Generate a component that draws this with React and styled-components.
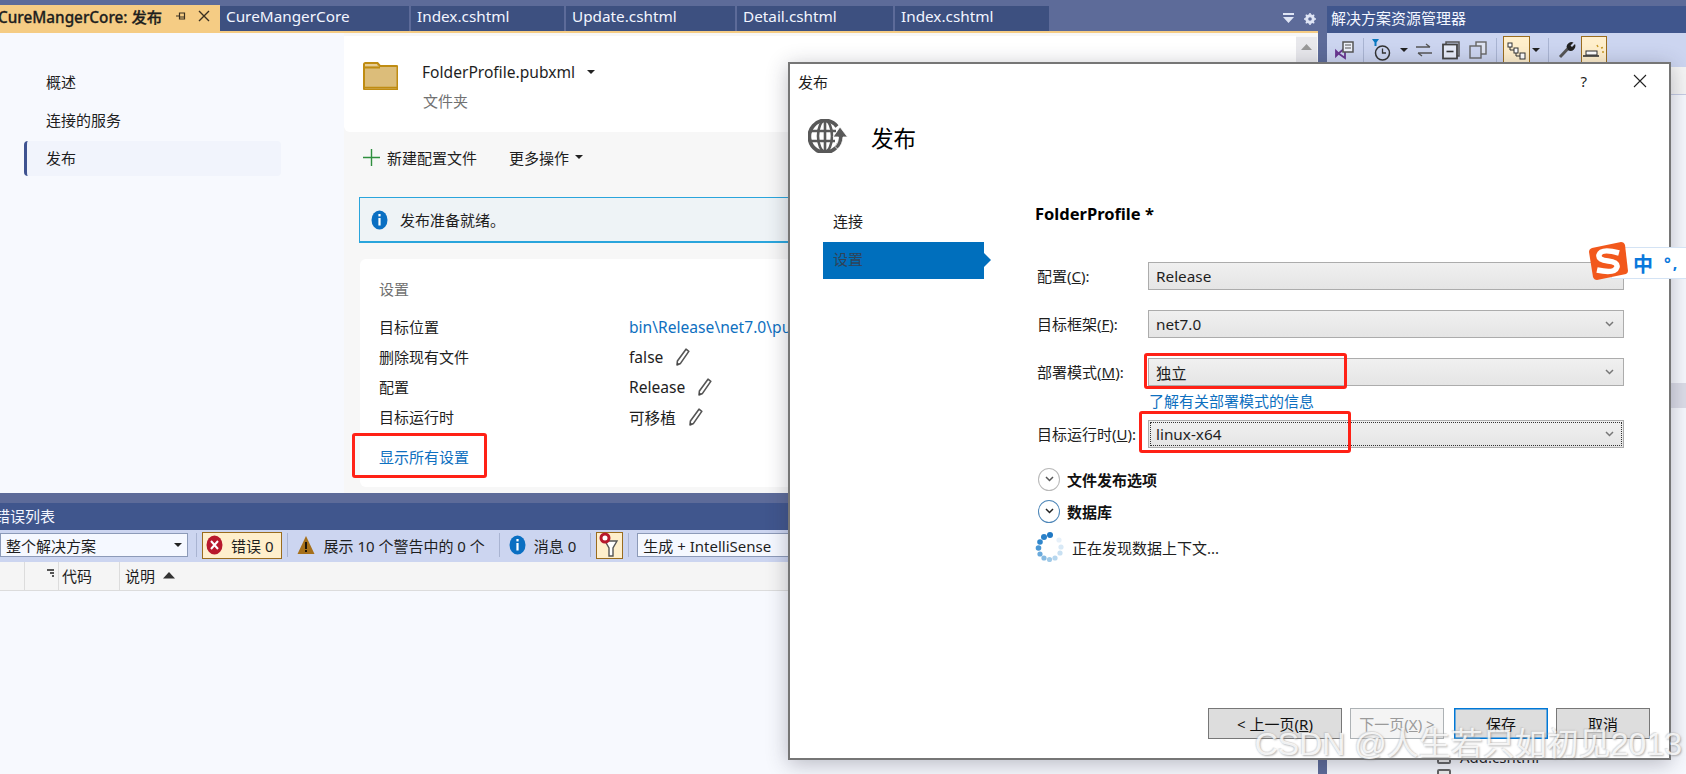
import React from "react";
import styled, { createGlobalStyle } from "styled-components";

const GlobalStyle = createGlobalStyle`
  html, body {
    margin: 0;
    height: 774px;
    overflow: hidden;
    background: #5d6b99;
    font-family: "Noto Sans", "Noto Sans CJK SC", sans-serif;
    font-size: 15px;
    color: #1e1e1e;
  }
`;

const Screen = styled.div`
  position: relative;
  width: 1686px;
  height: 774px;
  display: grid;
  grid-template-columns: 1327px 359px;
  overflow: hidden;
  background: #5d6b99;
`;

const LeftColumn = styled.div`
  display: flex;
  flex-direction: column;
  padding-right: 9px;
  min-width: 0;
`;

const TabStrip = styled.div`
  display: flex;
  align-items: flex-end;
  height: 31px;
  padding-top: 6px;
  box-sizing: border-box;
  gap: 2px;
`;

const Tab = styled.div`
  width: ${(p) => p.$width}px;
  height: 25px;
  padding-left: 6px;
  box-sizing: border-box;
  flex: none;
  background: #3d5080;
  color: #f2f5ff;
  font-size: 15.3px;
  line-height: 21px;
  white-space: nowrap;
`;

const ActiveTab = styled.div`
  width: 220px;
  height: 26px;
  padding-bottom: 4px;
  box-sizing: border-box;
  margin-right: -2px;
  flex: none;
  display: flex;
  align-items: center;
  background: #f5cc84;
  color: #1e1e1e;
  font-size: 15.3px;
  font-weight: 500;
  white-space: nowrap;
  overflow: hidden;
`;

const ActiveTabName = styled.span`
  margin-left: -2px;
  width: 177px;
  flex: none;
  -webkit-text-stroke: 0.3px #1e1e1e;
`;

const StripIcons = styled.div`
  margin-left: auto;
  display: flex;
  align-items: center;
  gap: 10px;
  height: 25px;
  padding-right: 2px;
`;

const DocArea = styled.div`
  display: flex;
  height: 462px;
  flex: none;
  border-top: 2px solid #f5cc84;
  box-sizing: border-box;
  background: #f7f7f7;
  overflow: hidden;
`;

const Sidebar = styled.nav`
  width: 344px;
  flex: none;
  padding: 32px 0 0 24px;
  box-sizing: border-box;
  background: #f7f9fe;
`;

const SideItem = styled.div`
  width: 257px;
  height: 35px;
  margin-bottom: 3px;
  padding-left: ${(p) => (p.$active ? 19 : 22)}px;
  box-sizing: border-box;
  line-height: 35px;
  border-radius: 4px;
  background: ${(p) => (p.$active ? "#f1f4fc" : "transparent")};
  border-left: ${(p) => (p.$active ? "3px solid #3f5391" : "0")};
`;

const DocContent = styled.main`
  flex: 1;
  min-width: 0;
`;

const DocScrollBar = styled.div`
  width: 21px;
  flex: none;
  margin: 4px 1px 0 0;
  padding-top: 7px;
  background: #e8e8ec;
  display: flex;
  justify-content: center;
  align-items: flex-start;
`;

const ProfileCard = styled.section`
  height: 96px;
  margin-top: 3px;
  padding: 26px 0 0 19px;
  box-sizing: border-box;
  display: flex;
  background: #fff;
  border-bottom-left-radius: 6px;
`;

const ProfileText = styled.div`
  margin-left: 24px;
  display: flex;
  flex-direction: column;
  gap: 9px;
`;

const ProfileName = styled.div`
  height: 20px;
  line-height: 20px;
  display: flex;
  align-items: center;
  gap: 12px;
  font-size: 15.6px;
`;

const Muted = styled.div`
  height: 20px;
  line-height: 20px;
  color: #717171;
  padding-left: ${(p) => p.$indent || 0}px;
`;

const Caret = styled.i`
  width: 0;
  height: 0;
  border-left: 4px solid transparent;
  border-right: 4px solid transparent;
  border-top: 4px solid #222;
`;

const ActionRow = styled.div`
  height: 50px;
  display: flex;
  align-items: center;
  padding-left: 19px;
`;

const ActionLabel = styled.span`
  margin-left: ${(p) => p.$gap}px;
  display: flex;
  align-items: center;
  gap: 6px;
`;

const InfoBar = styled.div`
  height: 46px;
  margin: 15px 0 0 15px;
  padding-left: 11px;
  box-sizing: border-box;
  display: flex;
  align-items: center;
  gap: 12px;
  background: #eef3f6;
  border: 1px solid #2aa5dc;
  border-bottom-width: 2px;
`;

const SettingsCard = styled.section`
  height: 228px;
  margin: 16px 0 0 16px;
  padding: 20px 0 0 19px;
  box-sizing: border-box;
  background: #fff;
  border-radius: 6px;
`;

const SettingsGrid = styled.div`
  margin-top: 13px;
  display: grid;
  grid-template-columns: 250px 1fr;
  grid-auto-rows: 30px;
  align-items: center;
`;

const SettingLabel = styled.span`
  padding-bottom: 2px;
`;

const SettingValue = styled.span`
  display: flex;
  align-items: center;
  gap: 11px;
  white-space: nowrap;
  font-size: 15.6px;
  color: ${(p) => (p.$link ? "#0e70c0" : "#1e1e1e")};
`;

const ShowAllLink = styled.a`
  position: relative;
  display: inline-block;
  margin-top: 15px;
  height: 20px;
  line-height: 20px;
  color: #0e70c0;
`;

const Highlight = styled.span`
  position: absolute;
  left: ${(p) => p.$left}px;
  top: ${(p) => p.$top}px;
  width: ${(p) => p.$width}px;
  height: ${(p) => p.$height}px;
  box-sizing: border-box;
  border: 3px solid #ff2116;
  border-radius: 3px;
  pointer-events: none;
`;

const PanelGap = styled.div`
  height: 10px;
  flex: none;
`;

const PanelTitle = styled.div`
  height: 27px;
  flex: none;
  padding-left: ${(p) => p.$pad}px;
  background: #40568d;
  color: #f4f6ff;
  line-height: ${(p) => p.$line || 25}px;
  white-space: nowrap;
  overflow: hidden;
`;

const CutTitle = styled.span`
  margin-left: -5px;
`;

const ErrorPanel = styled.section`
  flex: 1;
  display: flex;
  flex-direction: column;
  background: #f7f9fe;
  min-height: 0;
`;

const ErrorToolbar = styled.div`
  height: 32px;
  flex: none;
  padding-bottom: 2px;
  box-sizing: border-box;
  display: flex;
  align-items: center;
  background: #ccd5f0;
  white-space: nowrap;
  overflow: hidden;
`;

const ScopeCombo = styled.div`
  width: ${(p) => p.$width}px;
  margin-left: ${(p) => p.$left}px;
  flex: none;
  height: 24px;
  padding: 0 5px;
  box-sizing: border-box;
  display: flex;
  align-items: center;
  justify-content: space-between;
  background: #f5f8ff;
  border: 1px solid #8c9ab8;
`;

const BarSep = styled.i`
  width: 1px;
  height: 24px;
  flex: none;
  margin: 0 5px 0 ${(p) => p.$left || 5}px;
  background: #a9b4d2;
`;

const TallyButton = styled.div`
  height: 27px;
  flex: none;
  box-sizing: border-box;
  display: flex;
  align-items: center;
  gap: 8px;
  padding: 0 8px 0 3px;
  background: ${(p) => (p.$active ? "#ffefcc" : "transparent")};
  border: 1px solid ${(p) => (p.$active ? "#9a6c1e" : "transparent")};
`;

const FilterButton = styled(TallyButton)`
  width: 27px;
  padding: 0 0 0 2px;
`;

const ColumnHeader = styled.div`
  height: 28px;
  flex: none;
  display: flex;
  align-items: center;
  background: #f5f5f5;
  border-bottom: 1px solid #dcdcdc;
`;

const HeaderCell = styled.div`
  width: ${(p) => p.$width}px;
  height: 100%;
  flex: none;
  box-sizing: border-box;
  padding: 0 0 2px 3px;
  display: flex;
  align-items: center;
  gap: 8px;
  border-right: 1px solid #dcdcdc;
  &:last-child {
    border-right: 0;
    padding-left: 5px;
  }
`;

const GlyphCell = styled(HeaderCell)`
  align-items: flex-start;
  justify-content: flex-end;
  padding: 7px 3px 0 0;
`;

const RightColumn = styled.aside`
  display: flex;
  flex-direction: column;
  min-width: 0;
`;

const TopGap = styled.div`
  height: 6px;
  flex: none;
`;

const ExplorerToolbar = styled.div`
  height: 34px;
  flex: none;
  padding-left: 8px;
  display: flex;
  align-items: flex-start;
  background: #ccd5f0;
  overflow: hidden;
`;

const ToolSlot = styled.span`
  width: ${(p) => p.$w}px;
  margin-left: ${(p) => p.$gap}px;
  margin-top: 4px;
  flex: none;
  height: 26px;
  display: flex;
  align-items: center;
  justify-content: center;
`;

const ToolSep = styled.i`
  width: 1px;
  height: 24px;
  margin: 5px 0 0 ${(p) => p.$gap}px;
  flex: none;
  background: #a9b4d2;
`;

const ToolActive = styled(ToolSlot)`
  margin-top: 3px;
  height: 30px;
  box-sizing: border-box;
  background: #ffefcc;
  border: 1px solid #9a6c1e;
`;

const SearchStrip = styled.div`
  height: 27px;
  flex: none;
  background: #f5f5f5;
  border-bottom: 1px solid #c5cce4;
`;

const Tree = styled.div`
  flex: 1;
  background: #f7f9fe;
  overflow: hidden;
`;

const TreeSelected = styled.div`
  height: 25px;
  margin-top: 288px;
  background: #dcdde8;
`;

const TreeRow = styled.div`
  height: 19px;
  margin-top: ${(p) => p.$top}px;
  padding-left: 110px;
  display: flex;
  align-items: center;
  gap: 9px;
`;

const FileIcon = styled.i`
  width: 14px;
  height: 14px;
  flex: none;
  box-sizing: border-box;
  background: #eee;
  border: 2px solid #666;
  border-radius: 2px;
`;

const Dialog = styled.div`
  position: absolute;
  left: 788px;
  top: 62px;
  width: 883px;
  height: 698px;
  box-sizing: border-box;
  display: flex;
  flex-direction: column;
  background: #fff;
  border: 2px solid #767676;
  box-shadow: 0 4px 20px rgba(40, 40, 60, 0.3);
`;

const DialogBar = styled.div`
  height: 34px;
  flex: none;
  padding: 0 22px 0 8px;
  display: flex;
  align-items: center;
`;

const DialogHelp = styled.span`
  margin-left: auto;
  margin-right: 46px;
`;

const DialogHead = styled.div`
  height: 40px;
  margin-top: 21px;
  flex: none;
  padding-left: 18px;
  display: flex;
  gap: 23px;
`;

const DialogHeading = styled.h1`
  margin: 0;
  line-height: 40px;
  font-size: 22.5px;
  font-weight: 400;
  color: #000;
`;

const DialogBody = styled.div`
  flex: 1;
  min-height: 0;
  margin-top: 45px;
  padding-left: 33px;
  display: flex;
`;

const WizardNav = styled.div`
  width: 161px;
  flex: none;
  display: flex;
  flex-direction: column;
  gap: 1px;
`;

const WizardStep = styled.div`
  position: relative;
  height: 37px;
  padding-left: 10px;
  line-height: 35px;
  background: ${(p) => (p.$active ? "#006fbd" : "transparent")};
  color: ${(p) => (p.$active ? "#2f4358" : "#1e1e1e")};

  ${(p) =>
    p.$active &&
    `&::after {
      content: "";
      position: absolute;
      left: 100%;
      top: 11px;
      border-left: 7px solid #006fbd;
      border-top: 7px solid transparent;
      border-bottom: 7px solid transparent;
    }`}
`;

const WizardForm = styled.div`
  margin-left: 51px;
  width: 589px;
`;

const ProfileHeading = styled.div`
  height: 20px;
  margin-bottom: 38px;
  line-height: 20px;
  font-size: 16.5px;
  font-weight: 700;
  color: #000;
`;

const FormRow = styled.div`
  display: grid;
  grid-template-columns: 113px 476px;
  align-items: center;
  height: 28px;
  margin-bottom: ${(p) => p.$after}px;
`;

const FormLabel = styled.label`
  padding: 0 0 2px 2px;
  white-space: nowrap;
`;

const Select = styled.div`
  position: relative;
  height: 28px;
  padding: 0 9px 0 7px;
  box-sizing: border-box;
  display: flex;
  align-items: center;
  justify-content: space-between;
  background: linear-gradient(#f0f0f0, #e5e5e5);
  border: 1px solid #acacac;
  font-size: 15.3px;

  ${(p) =>
    p.$focused &&
    `&::before {
      content: "";
      position: absolute;
      inset: 1px;
      border: 1px dotted #333;
    }`}
`;

const FormHint = styled.a`
  display: block;
  height: 20px;
  line-height: 20px;
  margin: 0 0 9px 114px;
  color: #0e70c0;
  white-space: nowrap;
`;

const ExpanderRow = styled.div`
  height: 24px;
  margin-top: ${(p) => p.$top}px;
  padding-left: 3px;
  display: flex;
  align-items: center;
  gap: 7px;
  font-weight: 700;
  color: #111;
`;

const ExpanderCircle = styled.span`
  width: 22px;
  height: 23px;
  box-sizing: border-box;
  display: flex;
  align-items: center;
  justify-content: center;
  border-radius: 50%;
  background: #fff;
  border: 1.5px solid ${(p) => (p.$hot ? "#4d86b8" : "#b9b9b9")};
`;

const LoadingRow = styled.div`
  height: 30px;
  margin-top: 9px;
  display: flex;
  align-items: center;
  gap: 7px;
`;

const DialogFooter = styled.div`
  flex: none;
  padding: 0 19px 19px 0;
  display: flex;
  justify-content: flex-end;
  gap: 8px;
`;

const WizardButton = styled.div`
  width: ${(p) => p.$width || 94}px;
  height: 31px;
  margin-right: ${(p) => (p.$spaced ? 2 : 0)}px;
  box-sizing: border-box;
  display: flex;
  align-items: center;
  justify-content: center;
  background: ${(p) => (p.$disabled ? "#f4f4f4" : "#dddddd")};
  color: ${(p) => (p.$disabled ? "#9a9a9a" : "#111")};
  border: 1px solid
    ${(p) => (p.$disabled ? "#adb2b5" : p.$primary ? "#0078d7" : "#777")};
  box-shadow: ${(p) => (p.$primary ? "inset 0 0 0 0.5px #0078d7" : "none")};
`;

const ImeBar = styled.div`
  position: absolute;
  left: 1589px;
  top: 242px;
  width: 97px;
  height: 38px;
`;

const ImeStrip = styled.div`
  position: absolute;
  left: 22px;
  right: 0;
  top: 5px;
  height: 32px;
  box-sizing: border-box;
  padding-left: 21px;
  display: flex;
  align-items: center;
  gap: 11px;
  background: #fff;
  border: 1px solid #d4e3f4;
  border-right: 0;
  color: #0a78dc;
  font-weight: 700;
  font-size: 20px;
`;

const ImeLogo = styled.svg`
  position: absolute;
  left: 0;
  top: 0;
`;

const ImePunct = styled.span`
  font-size: 16px;
  letter-spacing: 2px;
`;

const Watermark = styled.div`
  position: absolute;
  right: 4px;
  bottom: 13px;
  font-family: "Liberation Sans", "Noto Sans CJK SC", sans-serif;
  font-size: 32px;
  line-height: 34px;
  white-space: nowrap;
  color: rgba(255, 255, 255, 0.82);
  text-shadow: 1px 1px 2px rgba(120, 120, 120, 0.55), -1px -1px 1px rgba(180, 180, 180, 0.4);
  pointer-events: none;
`;

const Pencil = () => (
  <svg width="16" height="18" viewBox="0 0 16 18" style={{ flex: "none" }}>
    <path d="M12 1.200l2.800 2.200L6.500 15.400 3 17l.4-4z" fill="#fff" stroke="#555" strokeWidth="1.600" strokeLinejoin="round" />
    <path d="M3.300 14.600l2 1.400L3 17z" fill="#444" />
  </svg>
);

const Chevron = ({ color = "#777" }) => (
  <svg width="9" height="6" viewBox="0 0 9 6">
    <path d="M1 1l3.500 3.500L8 1" fill="none" stroke={color} strokeWidth="1.500" />
  </svg>
);

const FolderIcon = () => (
  <svg width="35" height="28" viewBox="0 0 35 28" style={{ flex: "none" }}>
    <path d="M1 2.500Q1 1 2.500 1h12l2.500 3h16.500q1 0 1 1v21.500q0 1-1 1H2q-1 0-1-1z" fill="#dcbd7a" stroke="#bf8c12" strokeWidth="2" />
    <path d="M2 5.500h15" stroke="#bf8c12" strokeWidth="2" />
    <path d="M2 3h12" stroke="#ead3a0" strokeWidth="1.500" />
    <path d="M2 25.500h32" stroke="#bf8c12" strokeWidth="1.500" />
  </svg>
);

const InfoDot = ({ size = 17, color = "#0a6fc2" }) => (
  <svg width={size} height={size + 3} viewBox="0 0 17 20" style={{ flex: "none" }}>
    <ellipse cx="8.500" cy="10" rx="8" ry="9.500" fill={color} />
    <rect x="7.400" y="8" width="2.200" height="7.500" fill="#fff" />
    <rect x="7.400" y="4" width="2.200" height="2.400" fill="#fff" />
  </svg>
);

const ErrorDot = () => (
  <svg width="17" height="20" viewBox="0 0 17 20" style={{ flex: "none" }}>
    <ellipse cx="8.500" cy="10" rx="8" ry="9.500" fill="#b8182c" />
    <path d="M5 6l7 8M12 6l-7 8" stroke="#fff" strokeWidth="2" />
  </svg>
);

const WarnTriangle = () => (
  <svg width="18" height="20" viewBox="0 0 18 20" style={{ flex: "none" }}>
    <path d="M9 1l8.500 18H.5z" fill="#a6701a" />
    <rect x="8" y="7" width="2" height="7" fill="#1c1408" />
    <rect x="8" y="15" width="2" height="2" fill="#1c1408" />
  </svg>
);

const FunnelIcon = () => (
  <svg width="20" height="26" viewBox="0 0 20 26">
    <path d="M6 9h12l-4 7v8h-4v-8z" fill="#fff" stroke="#555" strokeWidth="1.400" />
    <circle cx="6" cy="6" r="4" fill="#fff" stroke="#b8182c" strokeWidth="3" />
  </svg>
);

const Spinner = () => {
  const dots = [
    [15, 3, "#1f78c4", 3],
    [9, 5, "#2a80c8", 3],
    [5, 10, "#2f86cc", 2.8],
    [3.5, 16, "#4a97d4", 2.8],
    [5, 22, "#6aaadc", 2.6],
    [9, 26, "#86bae2", 2.6],
    [14.5, 27.5, "#a0cae8", 2.6],
    [20, 26, "#b6d6ee", 2.6],
    [25, 21, "#c8e0f2", 2.6],
    [26, 15, "#d8e9f6", 2.6],
    [24, 8, "#e6f0f9", 2.6],
  ];
  return (
    <svg width="30" height="30" viewBox="0 0 30 30" style={{ flex: "none" }}>
      {dots.map(([x, y, fill, r]) => (
        <circle key={`${x}-${y}`} cx={x} cy={y} r={r} fill={fill} />
      ))}
    </svg>
  );
};

const GlobeIcon = () => (
  <svg width="40" height="34" viewBox="0 0 40 34" style={{ flex: "none" }}>
    <g fill="none" stroke="#595959" strokeWidth="2.600">
      <path d="M29 7.500A15.500 16 0 1 0 31 24" strokeWidth="3.800" />
      <ellipse cx="17" cy="17" rx="7" ry="15.500" />
      <path d="M3 12h25M3 22h24" />
      <path d="M17 1v32" />
    </g>
    <path d="M32 8l7.500 10H35c-.3 5-2 9-5.500 12l-2.500-2.500c2.400-2.500 3.400-6 3.500-9.500H25z" fill="#595959" stroke="#fff" strokeWidth="0.800" />
  </svg>
);

export default function App() {
  return (
    <Screen>
      <GlobalStyle />
      <LeftColumn>
        <TabStrip>
          <ActiveTab>
            <ActiveTabName>CureMangerCore: 发布</ActiveTabName>
            <svg width="12" height="12" viewBox="0 0 12 12">
              <path d="M1 6h3M4.500 2.500v7M4.500 3h5v6h-5M4.500 7h5" fill="none" stroke="#3a3020" strokeWidth="1.200" />
            </svg>
            <svg width="12" height="12" viewBox="0 0 12 12" style={{ marginLeft: 11 }}>
              <path d="M1 1l10 10M11 1L1 11" stroke="#3a3020" strokeWidth="1.400" />
            </svg>
          </ActiveTab>
          <Tab $width={189}>CureMangerCore</Tab>
          <Tab $width={153}>Index.cshtml</Tab>
          <Tab $width={169}>Update.cshtml</Tab>
          <Tab $width={156}>Detail.cshtml</Tab>
          <Tab $width={154}>Index.cshtml</Tab>
          <StripIcons>
            <svg width="11" height="11" viewBox="0 0 11 11">
              <path d="M0 0h11v2H0zM0 4h11L5.500 10z" fill="#dfe5f5" />
            </svg>
            <svg width="12" height="12" viewBox="0 0 12 12">
              <circle cx="6" cy="6" r="3.500" fill="none" stroke="#dfe5f5" strokeWidth="2.600" />
              <path d="M6 0v12M0 6h12M1.800 1.800l8.400 8.400M10.200 1.800l-8.400 8.400" stroke="#dfe5f5" strokeWidth="1.500" />
              <circle cx="6" cy="6" r="1.800" fill="#5d6b99" />
            </svg>
          </StripIcons>
        </TabStrip>
        <DocArea>
          <Sidebar>
            <SideItem>概述</SideItem>
            <SideItem>连接的服务</SideItem>
            <SideItem $active>发布</SideItem>
          </Sidebar>
          <DocContent>
            <ProfileCard>
              <FolderIcon />
              <ProfileText>
                <ProfileName>
                  FolderProfile.pubxml <Caret />
                </ProfileName>
                <Muted $indent={1}>文件夹</Muted>
              </ProfileText>
            </ProfileCard>
            <ActionRow>
              <svg width="17" height="17" viewBox="0 0 17 17">
                <path d="M8.500 0v17M0 8.500h17" stroke="#2f8f3f" strokeWidth="1.400" />
              </svg>
              <ActionLabel $gap={7}>新建配置文件</ActionLabel>
              <ActionLabel $gap={32}>
                更多操作 <Caret />
              </ActionLabel>
            </ActionRow>
            <InfoBar>
              <InfoDot />
              发布准备就绪。
            </InfoBar>
            <SettingsCard>
              <Muted>设置</Muted>
              <SettingsGrid>
                <SettingLabel>目标位置</SettingLabel>
                <SettingValue $link>bin\Release\net7.0\publish\</SettingValue>
                <SettingLabel>删除现有文件</SettingLabel>
                <SettingValue>
                  false <Pencil />
                </SettingValue>
                <SettingLabel>配置</SettingLabel>
                <SettingValue>
                  Release <Pencil />
                </SettingValue>
                <SettingLabel>目标运行时</SettingLabel>
                <SettingValue>
                  可移植 <Pencil />
                </SettingValue>
              </SettingsGrid>
              <ShowAllLink>
                显示所有设置
                <Highlight $left={-27} $top={-14} $width={135} $height={45} />
              </ShowAllLink>
            </SettingsCard>
          </DocContent>
          <DocScrollBar>
            <svg width="11" height="6" viewBox="0 0 11 6">
              <path d="M5.500 0L11 6H0z" fill="#999" />
            </svg>
          </DocScrollBar>
        </DocArea>
        <PanelGap />
        <ErrorPanel>
          <PanelTitle $pad={0} $line={27}>
            <CutTitle>错误列表</CutTitle>
          </PanelTitle>
          <ErrorToolbar>
            <ScopeCombo $width={188} $left={0}>
              整个解决方案 <Caret />
            </ScopeCombo>
            <BarSep $left={8} />
            <TallyButton $active>
              <ErrorDot />
              错误 0
            </TallyButton>
            <BarSep />
            <TallyButton>
              <WarnTriangle />
              展示 10 个警告中的 0 个
            </TallyButton>
            <BarSep />
            <TallyButton>
              <InfoDot />
              消息 0
            </TallyButton>
            <BarSep />
            <FilterButton $active>
              <FunnelIcon />
            </FilterButton>
            <BarSep />
            <ScopeCombo $width={200} $left={3}>
              生成 + IntelliSense
            </ScopeCombo>
          </ErrorToolbar>
          <ColumnHeader>
            <HeaderCell $width={25} />
            <GlyphCell $width={34}>
              <svg width="8" height="8" viewBox="0 0 8 8">
                <path d="M0 0h7v2H0zM3 3h4v2H3zM5 6h2v2H5z" fill="#555" />
              </svg>
            </GlyphCell>
            <HeaderCell $width={61}>代码</HeaderCell>
            <HeaderCell $width={300}>
              说明
              <svg width="12" height="7" viewBox="0 0 12 7">
                <path d="M6 0l6 6.500H0z" fill="#333" />
              </svg>
            </HeaderCell>
          </ColumnHeader>
        </ErrorPanel>
      </LeftColumn>

      <RightColumn>
        <TopGap />
        <PanelTitle $pad={4}>解决方案资源管理器</PanelTitle>
        <ExplorerToolbar>
          <ToolSlot $w={19} $gap={0}>
            <svg width="19" height="20" viewBox="0 0 19 20">
              <path d="M1 11l2.500 2.500L10 8v10l-6.500-4.500L1 16z" fill="none" stroke="#68358f" strokeWidth="1.800" />
              <rect x="8" y="2" width="10" height="10" fill="#eef1fa" stroke="#555" strokeWidth="1.500" />
              <path d="M10 5h6M10 8h6" stroke="#555" />
            </svg>
          </ToolSlot>
          <ToolSep $gap={9} />
          <ToolSlot $w={19} $gap={8}>
            <svg width="19" height="24" viewBox="0 0 19 24">
              <path d="M0 1h7L4.500 4.500V8h-2V4.500z" fill="#0a78c0" />
              <circle cx="10.500" cy="15" r="7" fill="none" stroke="#333" strokeWidth="1.500" />
              <path d="M10.500 10.500V15H14" fill="none" stroke="#333" strokeWidth="1.300" />
            </svg>
          </ToolSlot>
          <ToolSlot $w={8} $gap={9}>
            <Caret />
          </ToolSlot>
          <ToolSlot $w={16} $gap={8}>
            <svg width="16" height="14" viewBox="0 0 16 14">
              <path d="M0 4h14M10 1l4 3M16 10H2M6 13l-4-3" fill="none" stroke="#555" strokeWidth="1.300" />
            </svg>
          </ToolSlot>
          <ToolSlot $w={18} $gap={10}>
            <svg width="18" height="19" viewBox="0 0 18 19">
              <path d="M4 3V1h13v14h-2" fill="none" stroke="#555" strokeWidth="1.500" />
              <rect x="1" y="3.500" width="14" height="14" fill="#e6ebf8" stroke="#444" strokeWidth="1.800" />
              <path d="M4.500 10.500h7" stroke="#333" strokeWidth="1.600" />
            </svg>
          </ToolSlot>
          <ToolSlot $w={18} $gap={9}>
            <svg width="18" height="18" viewBox="0 0 18 18">
              <rect x="7" y="1" width="10" height="12" fill="#dfe4f2" stroke="#666" strokeWidth="1.400" />
              <rect x="1" y="5" width="11" height="12" fill="#ccd5f0" stroke="#666" strokeWidth="1.400" />
            </svg>
          </ToolSlot>
          <ToolSep $gap={9} />
          <ToolActive $w={27} $gap={6}>
            <svg width="19" height="18" viewBox="0 0 19 18">
              <rect x="1" y="1" width="4" height="4" fill="#fff" stroke="#333" />
              <rect x="7" y="6" width="4" height="5" fill="#fff" stroke="#333" />
              <rect x="13" y="11" width="5" height="6" fill="#fff" stroke="#333" />
              <path d="M3 5v3h4M9 11v3h4" fill="none" stroke="#333" />
            </svg>
          </ToolActive>
          <ToolSlot $w={8} $gap={2}>
            <Caret />
          </ToolSlot>
          <ToolSep $gap={8} />
          <ToolSlot $w={18} $gap={9}>
            <svg width="18" height="18" viewBox="0 0 18 18">
              <path d="M2 16L10 7.500" stroke="#555" strokeWidth="3" />
              <path d="M8.500 6a5 5 0 0 1 7-4.500L12.500 4.500l1.500 1.500 3-3a5 5 0 0 1-6.500 6.500z" fill="#222" />
            </svg>
          </ToolSlot>
          <ToolActive $w={26} $gap={5}>
            <svg width="22" height="14" viewBox="0 0 22 14">
              <path d="M0 12h16" stroke="#333" strokeWidth="1.600" />
              <rect x="3" y="7" width="11" height="4" fill="#fff" stroke="#333" />
              <path d="M14 1l1 2M18 4l2-.5M19 8h2" stroke="#c89a2a" strokeWidth="1.500" />
            </svg>
          </ToolActive>
        </ExplorerToolbar>
        <SearchStrip />
        <Tree>
          <TreeSelected />
          <TreeRow $top={339}>
            <FileIcon />
            Add.cshtml
          </TreeRow>
          <TreeRow $top={0}>
            <FileIcon />
          </TreeRow>
        </Tree>
      </RightColumn>

      <Dialog>
        <DialogBar>
          发布
          <DialogHelp>?</DialogHelp>
          <svg width="14" height="14" viewBox="0 0 14 14">
            <path d="M1 1l12 12M13 1L1 13" stroke="#222" strokeWidth="1.100" />
          </svg>
        </DialogBar>
        <DialogHead>
          <GlobeIcon />
          <DialogHeading>发布</DialogHeading>
        </DialogHead>
        <DialogBody>
          <WizardNav>
            <WizardStep>连接</WizardStep>
            <WizardStep $active>设置</WizardStep>
          </WizardNav>
          <WizardForm>
            <ProfileHeading>FolderProfile *</ProfileHeading>
            <FormRow $after={20}>
              <FormLabel>
                配置(<u>C</u>):
              </FormLabel>
              <Select>Release</Select>
            </FormRow>
            <FormRow $after={20}>
              <FormLabel>
                目标框架(<u>F</u>):
              </FormLabel>
              <Select>
                net7.0 <Chevron />
              </Select>
            </FormRow>
            <FormRow $after={5}>
              <FormLabel>
                部署模式(<u>M</u>):
              </FormLabel>
              <Select>
                独立 <Chevron />
                <Highlight $left={-5} $top={-6} $width={203} $height={36} />
              </Select>
            </FormRow>
            <FormHint>了解有关部署模式的信息</FormHint>
            <FormRow $after={0}>
              <FormLabel>
                目标运行时(<u>U</u>):
              </FormLabel>
              <Select $focused>
                linux-x64 <Chevron />
                <Highlight $left={-10} $top={-10} $width={212} $height={42} />
              </Select>
            </FormRow>
            <ExpanderRow $top={19}>
              <ExpanderCircle>
                <Chevron color="#555" />
              </ExpanderCircle>
              文件发布选项
            </ExpanderRow>
            <ExpanderRow $top={8}>
              <ExpanderCircle $hot>
                <Chevron color="#222" />
              </ExpanderCircle>
              数据库
            </ExpanderRow>
            <LoadingRow>
              <Spinner />
              正在发现数据上下文...
            </LoadingRow>
          </WizardForm>
        </DialogBody>
        <DialogFooter>
          <WizardButton $width={134}>
            &lt; 上一页(<u>R</u>)
          </WizardButton>
          <WizardButton $disabled $spaced>
            下一页(<u>X</u>) &gt;
          </WizardButton>
          <WizardButton $primary>保存</WizardButton>
          <WizardButton>取消</WizardButton>
        </DialogFooter>
      </Dialog>

      <ImeBar>
        <ImeStrip>
          中<ImePunct>°,</ImePunct>
        </ImeStrip>
        <ImeLogo width="40" height="38" viewBox="0 0 40 38">
          <path d="M3 6L32 0q3 0 4 3l3 26q0 2-2 3L8 38q-3 0-4-3L0 10q0-3 3-4z" fill="#f2581c" />
          <path d="M30 11Q12 6 10 13q-1 5 9 6t9 6q-2 7-20 3" fill="none" stroke="#fff" strokeWidth="5.500" />
        </ImeLogo>
      </ImeBar>

      <Watermark>CSDN @人生若只如初见2013</Watermark>
    </Screen>
  );
}
